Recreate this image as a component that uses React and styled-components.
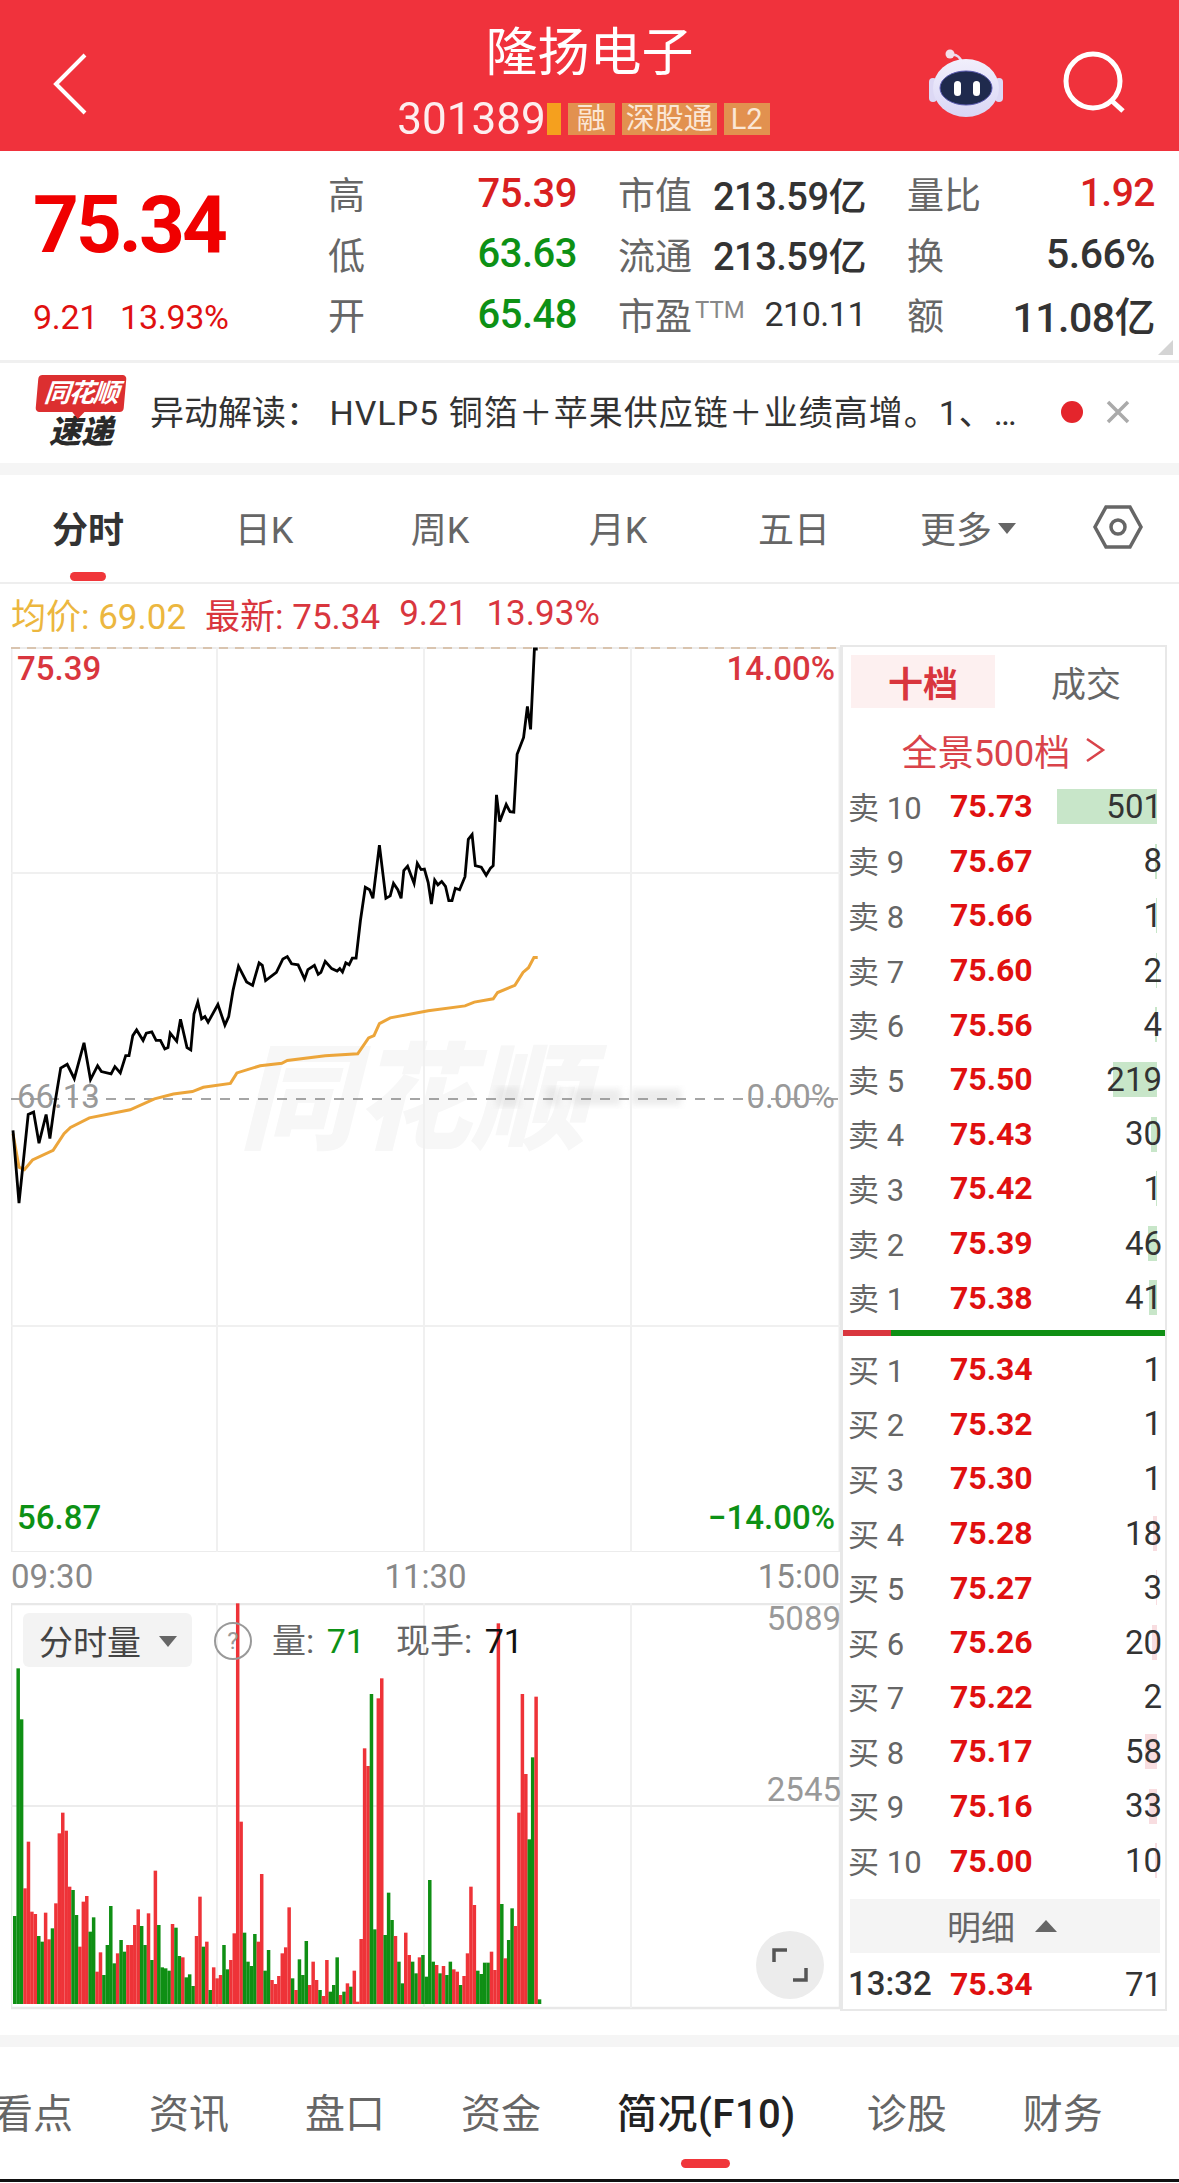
import React from 'react';
import styled, { createGlobalStyle } from 'styled-components';

const GlobalStyle = createGlobalStyle`
  html, body { margin: 0; padding: 0; background: #fff; }
  body { font-family: Roboto, "Noto Sans CJK SC", sans-serif; }
`;

const RED = '#e01010';
const GREEN = '#0d9115';

const sellRows = [
  ['卖', 10, '75.73', 501, 100],
  ['卖', 9, '75.67', 8, 2],
  ['卖', 8, '75.66', 1, 1],
  ['卖', 7, '75.60', 2, 1],
  ['卖', 6, '75.56', 4, 2],
  ['卖', 5, '75.50', 219, 44],
  ['卖', 4, '75.43', 30, 6],
  ['卖', 3, '75.42', 1, 1],
  ['卖', 2, '75.39', 46, 9],
  ['卖', 1, '75.38', 41, 8],
];

const buyRows = [
  ['买', 1, '75.34', 1, 0],
  ['买', 2, '75.32', 1, 0],
  ['买', 3, '75.30', 1, 0],
  ['买', 4, '75.28', 18, 4],
  ['买', 5, '75.27', 3, 1],
  ['买', 6, '75.26', 20, 5],
  ['买', 7, '75.22', 2, 0],
  ['买', 8, '75.17', 58, 12],
  ['买', 9, '75.16', 33, 8],
  ['买', 10, '75.00', 10, 2],
];

// read off the reference crop, in crop units
const pricePts = [
  [24,1378],[35,1530],[52,1345],[62,1340],[72,1405],[85,1345],[92,1395],[100,1330],[112,1248],[124,1240],
  [137,1270],[155,1195],[167,1272],[180,1243],[187,1255],[205,1260],[212,1245],[222,1258],[232,1222],[238,1222],
  [245,1180],[252,1168],[264,1190],[270,1175],[280,1172],[288,1190],[296,1190],[304,1208],[310,1205],[314,1175],
  [326,1192],[333,1146],[345,1205],[352,1210],[358,1135],[365,1110],[372,1145],[378,1140],[384,1152],[402,1115],
  [415,1158],[422,1140],[430,1085],[440,1035],[455,1068],[466,1075],[478,1028],[484,1033],[490,1065],[510,1048],
  [522,1020],[530,1015],[538,1030],[550,1032],[562,1062],[568,1042],[580,1033],[587,1052],[592,1048],[600,1025],
  [612,1040],[622,1045],[627,1040],[632,1047],[638,1028],[644,1032],[650,1018],[657,1018],[665,940],[674,870],
  [682,875],[688,893],[700,782],[712,893],[720,888],[726,862],[734,875],[740,893],[745,835],[752,826],
  [764,862],[770,820],[777,833],[783,832],[790,860],[796,905],[802,855],[808,865],[815,858],[822,868],
  [828,898],[834,898],[840,872],[848,875],[858,848],[864,770],[871,760],[877,825],[888,828],[897,845],
  [905,830],[910,825],[916,677],[922,733],[934,697],[941,712],[948,713],[954,592],[966,557],[973,492],
  [979,540],[986,372],[992,372],
];

const avgPts = [
  [24,1385],[35,1455],[45,1460],[60,1440],[98,1420],[118,1385],[130,1372],[165,1352],[240,1335],[285,1312],
  [320,1302],[355,1297],[375,1288],[425,1280],[437,1258],[480,1243],[520,1238],[530,1232],[600,1222],[660,1218],
  [680,1185],[690,1180],[700,1155],[720,1143],[790,1128],[858,1118],[875,1110],[910,1103],[918,1090],[950,1075],
  [965,1048],[975,1038],[985,1017],[992,1017],
];

const volBars = `g1068 g325 g478 r985 r845 r1055 r1062 g1128 g1145 r1058 r1138 g1105 r1030 r820 r758 r812 r980 g990 g1065 r1160
r1025 r1008 g1115 g1072 r1235 r1177 g1245 g1155 g1038 g1210 r1180 g1140 g1175 r1155 r1155 r1095 r1048 g1098 g1155 r1060
g1200 r932 g1095 g1222 g1225 g1232 r1092 g1103 g1188 r1192 g1252 g1243 g1278 r1128 r1010 g1160 r1145 g1290 r1222 r1255
r1245 g1155 g1228 r1200 r1120 r130 r785 g1118 g1205 g1218 g1122 r1145 r942 g1232 g1170 r1260 r1272 r1248 r1180 r1162
r1042 g1255 r1290 g1198 g1245 g1143 r1275 r1205 r1260 g1290 r1308 r1200 g1295 g1275 g1192 r1305 g1295 r1270 g1280 r1232
r1325 r1137 r565 r618 g402 g1108 r415 r355 g1125 g998 g1080 r1128 g1205 g1270 r1118 r1185 g1205 g1240 r1192 g1185
g1250 g960 g1205 r1215 g1240 r1218 g1245 g1205 r1228 r1235 g1275 r1248 r1180 r980 r1035 g1232 g1242 g1208 g1208 r1175
r1230 r190 g1032 r1195 g1140 g1045 r1098 r758 r402 r642 g838 g592 r410 g1318`.split(/\s+/);

const toLine = (pts) =>
  pts.map(([x, y]) => `${(x / 1.845 - 11).toFixed(1)},${(470 + y / 2.09 - 646).toFixed(1)}`).join(' ');

const Page = styled.div`
  width: 1179px;
  height: 2183px;
  overflow: hidden;
  display: flex;
  flex-direction: column;
  background: #fff;
  color: #333;
`;

const Header = styled.header`
  height: 151px;
  flex: none;
  position: relative;
  background: #f0323c;
  display: flex;
  flex-direction: column;
  align-items: center;
  color: #fff;
`;

const Title = styled.div`
  margin-top: 22px;
  font-size: 52px;
  line-height: 64px;
`;

const CodeRow = styled.div`
  display: flex;
  align-items: center;
  height: 32px;
  margin-top: 17px;
  margin-left: -5px;
`;

const Code = styled.span`
  font-size: 44px;
  color: #fff;
  opacity: 0.92;
  margin-right: 1px;
`;

const Stripe = styled.span`
  width: 14px;
  height: 32px;
  background: #f5a01e;
  margin-right: 7px;
`;

const Tag = styled.span`
  height: 32px;
  padding: 0 ${(p) => p.$pad}px;
  margin-right: 7px;
  background: #e2914f;
  color: #fbe7d6;
  font-size: 29px;
  line-height: 32px;
`;

const BackIcon = styled.svg`
  position: absolute;
  left: 50px;
  top: 50px;
`;

const RobotIcon = styled.svg`
  position: absolute;
  left: 925px;
  top: 46px;
`;

const SearchIcon = styled.svg`
  position: absolute;
  left: 1060px;
  top: 48px;
`;

const Quote = styled.section`
  height: 209px;
  flex: none;
  position: relative;
  display: flex;
`;

const PriceBlock = styled.div`
  width: 328px;
  flex: none;
  box-sizing: border-box;
  padding: 26px 0 0 33px;
`;

const BigPrice = styled.div`
  font-size: 80px;
  line-height: 96px;
  font-weight: 700;
  color: #f00000;
  letter-spacing: -3px;
`;

const PriceChange = styled.div`
  margin-top: 24px;
  display: flex;
  gap: 22px;
  font-size: 34px;
  line-height: 40px;
  color: #e01010;
  letter-spacing: -0.3px;
`;

const StatGrid = styled.div`
  display: grid;
  grid-template-columns: 249px 248px 248px;
  column-gap: 41px;
  grid-auto-rows: 60.5px;
  padding-top: 12px;
`;

const StatCell = styled.div`
  display: flex;
  justify-content: space-between;
  align-items: center;
`;

const StatLabel = styled.span`
  font-size: 37px;
  color: #666;
`;

const StatValue = styled.span`
  font-size: ${(p) => p.$size || 38}px;
  font-weight: ${(p) => p.$weight || 500};
  color: ${(p) => p.$color || '#333'};
  letter-spacing: -0.5px;
`;

const Sup = styled.sup`
  font-size: 24px;
  color: #888;
  margin-left: 3px;
  vertical-align: 12px;
  line-height: 0;
`;

const CornerMark = styled.i`
  position: absolute;
  right: 6px;
  bottom: 5px;
  width: 0;
  height: 0;
  border-left: 15px solid transparent;
  border-bottom: 15px solid #d4d4d4;
`;

const Notice = styled.section`
  height: 100px;
  flex: none;
  border-top: 3px solid #f0f0f0;
  border-bottom: 12px solid #f5f5f5;
  display: flex;
  align-items: center;
  position: relative;
`;

const Logo = styled.div`
  width: 150px;
  flex: none;
  padding-left: 37px;
  box-sizing: border-box;
  margin-top: -2px;
`;

const LogoTop = styled.div`
  width: 88px;
  height: 37px;
  position: relative;
  background: #dc2f30;
  border-radius: 4px;
  transform: skewX(-5deg);
  color: #fff;
  font-size: 26px;
  line-height: 37px;
  font-weight: 700;
  font-style: italic;
  text-align: center;
  letter-spacing: -1.5px;
  white-space: nowrap;

  &::after {
    content: '';
    position: absolute;
    left: 36px;
    bottom: -7px;
    border-left: 7px solid transparent;
    border-right: 7px solid transparent;
    border-top: 8px solid #dc2f30;
  }
`;

const LogoBottom = styled.div`
  margin-top: 2px;
  width: 88px;
  text-align: center;
  color: #2a2a2a;
  font-size: 32px;
  line-height: 36px;
  font-weight: 900;
  font-style: italic;
`;

const NoticeText = styled.div`
  width: 890px;
  flex: none;
  margin-top: -5px;
  font-size: 34px;
  color: #333;
  white-space: nowrap;
  overflow: hidden;
`;

const NoticeBody = styled.span`
  letter-spacing: 1px;
`;

const NoticeDot = styled.i`
  position: absolute;
  left: 1061px;
  top: 38px;
  width: 22px;
  height: 22px;
  border-radius: 50%;
  background: #e4252c;
`;

const CloseIcon = styled.svg`
  position: absolute;
  left: 1104px;
  top: 35px;
`;

const PeriodTabs = styled.nav`
  height: 109px;
  flex: none;
  display: grid;
  grid-template-columns: 176px 176px 176px 180px 172px 176px 123px;
  border-bottom: 2px solid #eee;
  box-sizing: border-box;
`;

const PeriodTab = styled.div`
  position: relative;
  display: flex;
  align-items: center;
  justify-content: center;
  padding-bottom: 3px;
  font-size: 36px;
  font-weight: ${(p) => (p.$active ? 700 : 400)};
  color: ${(p) => (p.$active ? '#333' : '#666')};

  ${(p) =>
    p.$active &&
    `&::after {
      content: '';
      position: absolute;
      left: 70px;
      bottom: 1px;
      width: 36px;
      height: 9px;
      border-radius: 5px;
      background: #f0363a;
    }`}
`;

const Caret = styled.i`
  margin-left: 6px;
  margin-top: 2px;
  border-left: 9px solid transparent;
  border-right: 9px solid transparent;
  border-top: 11px solid #666;
`;

const Legend = styled.div`
  height: 61px;
  flex: none;
  display: flex;
  align-items: center;
  padding: 0 0 2px 11px;
  box-sizing: border-box;
  font-size: 35px;
  gap: 19px;
  color: #d9363e;
`;

const LegendItem = styled.span`
  color: ${(p) => p.$color || 'inherit'};
  white-space: nowrap;
`;

const Workspace = styled.div`
  height: 1366px;
  flex: none;
  display: flex;
  padding-left: 11px;
`;

const LeftColumn = styled.div`
  width: 829px;
  flex: none;
  display: flex;
  flex-direction: column;
`;

const PriceChart = styled.div`
  position: relative;
  margin-top: 2px;
  height: 905px;
  flex: none;
`;

const ChartSvg = styled.svg`
  position: absolute;
  left: 0;
  top: 0;
  display: block;
`;

const Watermark = styled.div`
  position: absolute;
  left: 228px;
  top: 383px;
  font-size: 116px;
  line-height: 140px;
  font-weight: 900;
  font-style: italic;
  color: #f7f7f7;
  white-space: nowrap;
`;

const ChartLabel = styled.span`
  position: absolute;
  ${(p) => (p.$right ? 'right: 5px;' : 'left: 6px;')}
  top: ${(p) => p.$top}px;
  font-size: 33px;
  line-height: 36px;
  font-weight: ${(p) => p.$weight || 400};
  color: ${(p) => p.$color};
`;

const TimeRow = styled.div`
  height: 51px;
  flex: none;
  display: flex;
  justify-content: space-between;
  align-items: center;
  font-size: 33px;
  color: #888;
  padding-bottom: 3px;
  box-sizing: border-box;
`;

const VolumeChart = styled.div`
  position: relative;
  height: 407px;
  flex: none;
`;

const VolumeBadge = styled.div`
  position: absolute;
  left: 12px;
  top: 10px;
  width: 169px;
  height: 54px;
  border-radius: 6px;
  background: #f3f3f3;
  display: flex;
  align-items: center;
  gap: 12px;
  padding-left: 16px;
  box-sizing: border-box;
  font-size: 34px;
  color: #444;
`;

const HelpMark = styled.span`
  position: absolute;
  left: 203px;
  top: 19px;
  width: 34px;
  height: 34px;
  border: 2px solid #999;
  border-radius: 50%;
  text-align: center;
  font-size: 24px;
  line-height: 34px;
  color: #999;
`;

const VolumeInfo = styled.span`
  position: absolute;
  left: ${(p) => p.$left}px;
  top: 17px;
  font-size: 34px;
  line-height: 42px;
  color: #666;
  white-space: nowrap;
`;

const InfoValue = styled.b`
  font-weight: 400;
  margin-left: 4px;
  color: ${(p) => p.$color};
`;

const AxisLabel = styled.span`
  position: absolute;
  right: -1px;
  top: ${(p) => p.$top}px;
  font-size: 33px;
  line-height: 36px;
  color: #999;
`;

const ExpandButton = styled.div`
  position: absolute;
  left: 745px;
  top: 328px;
  width: 68px;
  height: 68px;
  border-radius: 50%;
  background: #ececec;
  display: flex;
  align-items: center;
  justify-content: center;
`;

const Depth = styled.aside`
  width: 327px;
  flex: none;
  box-sizing: border-box;
  border: 2px solid #e8e8e8;
  border-width: 2px 2px 2px 3px;
  height: 1366px;
  display: flex;
  flex-direction: column;
`;

const DepthTabs = styled.div`
  display: grid;
  grid-template-columns: 144px 1fr;
  margin: 8px 0 0 8px;
  height: 53px;
  flex: none;
`;

const DepthTab = styled.div`
  display: flex;
  align-items: center;
  justify-content: center;
  padding-left: ${(p) => (p.$active ? 0 : 12)}px;
  font-size: 35px;
  font-weight: ${(p) => (p.$active ? 700 : 400)};
  color: ${(p) => (p.$active ? '#d9363e' : '#666')};
  background: ${(p) => (p.$active ? '#fdf0f0' : 'transparent')};
`;

const FullDepth = styled.div`
  height: 71px;
  flex: none;
  box-sizing: border-box;
  padding-top: 12px;
  display: flex;
  align-items: center;
  justify-content: center;
  gap: 14px;
  font-size: 36px;
  color: #d9434a;
`;

const DepthRow = styled.div`
  height: 54.6px;
  flex: none;
  position: relative;
  display: grid;
  grid-template-columns: 102px 100px 1fr;
  align-items: center;
  padding: 0 3px 0 5px;
`;

const RowLabel = styled.span`
  font-size: ${(p) => p.$size || 31}px;
  margin-top: -2px;
  color: ${(p) => p.$color || '#666'};
  font-weight: ${(p) => p.$weight || 400};
  white-space: nowrap;
  position: relative;
`;

const RowPrice = styled.span`
  font-size: 32px;
  font-weight: 700;
  color: ${RED};
  position: relative;
`;

const RowQty = styled.span`
  font-size: 33px;
  color: #333;
  text-align: right;
  position: relative;
`;

const QtyBar = styled.i`
  position: absolute;
  right: 8px;
  top: 10px;
  height: 35px;
  background: ${(p) => p.$color};
`;

const RatioBar = styled.div`
  margin: 5px 0 6px;
  height: 6px;
  flex: none;
  display: flex;
`;

const RatioPart = styled.i`
  display: block;
  height: 100%;
  flex: ${(p) => p.$grow};
  background: ${(p) => p.$color};
`;

const DetailBar = styled.div`
  margin: 11px 5px 4px 7px;
  height: 54px;
  flex: none;
  background: #f4f4f4;
  display: flex;
  align-items: center;
  justify-content: center;
  gap: 20px;
  padding-right: 6px;
  font-size: 34px;
  color: #666;
`;

const CaretUp = styled.i`
  border-left: 11px solid transparent;
  border-right: 11px solid transparent;
  border-bottom: 12px solid #666;
`;

const BottomGap = styled.div`
  height: 12px;
  flex: none;
  margin-top: 24px;
  background: #f5f5f5;
`;

const BottomTabs = styled.nav`
  height: 132px;
  flex: none;
  box-sizing: border-box;
  padding-top: 3px;
  display: flex;
  gap: 76px;
  align-items: center;
  margin-left: -7px;
  white-space: nowrap;
`;

const BottomTab = styled.div`
  position: relative;
  font-size: 40px;
  line-height: 50px;
  font-weight: ${(p) => (p.$active ? 500 : 400)};
  color: ${(p) => (p.$active ? '#222' : '#666')};
  letter-spacing: ${(p) => (p.$active ? '0.5px' : '0')};
  margin-right: ${(p) => (p.$active ? -5 : 0)}px;

  ${(p) =>
    p.$active &&
    `&::after {
      content: '';
      position: absolute;
      left: 64px;
      bottom: -28px;
      width: 49px;
      height: 9px;
      border-radius: 5px;
      background: #f0363a;
    }`}
`;

const HomeBar = styled.div`
  height: 3px;
  flex: none;
  background: #111;
`;

function Robot() {
  return (
    <RobotIcon width="82" height="74" viewBox="0 0 82 74">
      <defs>
        <linearGradient id="shell" x1="0" y1="0" x2="0" y2="1">
          <stop offset="0" stopColor="#f1effc" />
          <stop offset="1" stopColor="#d9d6f5" />
        </linearGradient>
      </defs>
      <path d="M38 19 C36 11 31 8 27 9" fill="none" stroke="#ead9ee" strokeWidth="2.5" />
      <circle cx="25" cy="8" r="4.5" fill="#f3dfea" />
      <rect x="4" y="32" width="8" height="24" rx="4" fill="#dcd8f4" />
      <rect x="70" y="32" width="8" height="24" rx="4" fill="#dcd8f4" />
      <ellipse cx="41" cy="42" rx="33" ry="29" fill="url(#shell)" />
      <ellipse cx="41" cy="42" rx="26" ry="17" fill="#1f2a4d" stroke="#5b5bb0" strokeWidth="1" />
      <rect x="29" y="35" width="7" height="15" rx="3.5" fill="#fff" />
      <rect x="48" y="35" width="7" height="15" rx="3.5" fill="#fff" />
    </RobotIcon>
  );
}

function StatRow({ label, value, color, size, weight, sup }) {
  return (
    <StatCell>
      <StatLabel>
        {label}
        {sup && <Sup>{sup}</Sup>}
      </StatLabel>
      <StatValue $color={color} $size={size} $weight={weight}>
        {value}
      </StatValue>
    </StatCell>
  );
}

function PriceLines() {
  const gridX = [206, 413, 620];
  return (
    <ChartSvg width="829" height="905" viewBox="0 0 829 905">
      <filter id="smudge">
        <feGaussianBlur stdDeviation="3" />
      </filter>
      <g filter="url(#smudge)" fill="#d6d6d6" opacity="0.45">
        <rect x="485" y="440" width="24" height="20" />
        <rect x="535" y="440" width="14" height="18" />
        <rect x="560" y="442" width="50" height="16" />
        <rect x="620" y="442" width="50" height="16" />
      </g>
      <rect x="0.5" y="1" width="828" height="904" fill="none" stroke="#ececec" strokeWidth="2" />
      {gridX.map((x) => (
        <line key={x} x1={x} x2={x} y1="0" y2="905" stroke="#f0f0f0" strokeWidth="2" />
      ))}
      <line x1="0" x2="829" y1="226" y2="226" stroke="#f0f0f0" strokeWidth="2" />
      <line x1="0" x2="829" y1="679" y2="679" stroke="#f0f0f0" strokeWidth="2" />
      <line x1="0" x2="829" y1="1" y2="1" stroke="#d2b79a" strokeWidth="1.5" strokeDasharray="9 7" />
      <line x1="0" x2="829" y1="452" y2="452" stroke="#888" strokeWidth="1.5" strokeDasharray="10 9" />
      <polyline points={toLine(avgPts)} fill="none" stroke="#eca53a" strokeWidth="3" />
      <polyline points={toLine(pricePts)} fill="none" stroke="#000" strokeWidth="2.8" />
    </ChartSvg>
  );
}

function VolumeBars() {
  const top = (y) => 1560 + y / 3 - 1603;
  return (
    <ChartSvg width="829" height="407" viewBox="0 0 829 407">
      <rect x="0" y="1" width="829" height="404" fill="none" stroke="#e8e8e8" strokeWidth="2.5" />
      {[206, 413, 620].map((x) => (
        <line key={x} x1={x} x2={x} y1="0" y2="405" stroke="#f0f0f0" strokeWidth="2" />
      ))}
      <line x1="0" x2="829" y1="203" y2="203" stroke="#ececec" strokeWidth="2" />
      {volBars.map((b, i) => {
        const y = top(Number(b.slice(1)));
        return (
          <rect
            key={i}
            x={2 + i * 3.43}
            y={y}
            width="3.5"
            height={401 - y}
            fill={b[0] === 'r' ? '#ee3338' : '#0f8f14'}
          />
        );
      })}
    </ChartSvg>
  );
}

function BookRow({ row, barColor }) {
  const [side, level, price, qty, bar] = row;
  return (
    <DepthRow>
      {bar > 0 && <QtyBar $color={barColor} style={{ width: bar }} />}
      <RowLabel>
        {side} {level}
      </RowLabel>
      <RowPrice>{price}</RowPrice>
      <RowQty>{qty}</RowQty>
    </DepthRow>
  );
}

export default function App() {
  return (
    <Page>
      <GlobalStyle />
      <Header>
        <BackIcon width="40" height="68" viewBox="0 0 40 68">
          <path d="M35 5 L6 34 L35 63" fill="none" stroke="#fff" strokeWidth="4" />
        </BackIcon>
        <Title>隆扬电子</Title>
        <CodeRow>
          <Code>301389</Code>
          <Stripe />
          <Tag $pad={9}>融</Tag>
          <Tag $pad={4}>深股通</Tag>
          <Tag $pad={7}>L2</Tag>
        </CodeRow>
        <Robot />
        <SearchIcon width="70" height="70" viewBox="0 0 70 70">
          <circle cx="33" cy="33" r="27" fill="none" stroke="#fff" strokeWidth="5" />
          <path d="M52 53 L63 63" fill="none" stroke="#fff" strokeWidth="5" />
        </SearchIcon>
      </Header>

      <Quote>
        <PriceBlock>
          <BigPrice>75.34</BigPrice>
          <PriceChange>
            <span>9.21</span>
            <span>13.93%</span>
          </PriceChange>
        </PriceBlock>
        <StatGrid>
          <StatRow label="高" value="75.39" color="#d9201f" size={40} />
          <StatRow label="市值" value="213.59亿" />
          <StatRow label="量比" value="1.92" color="#d9201f" size={39} />
          <StatRow label="低" value="63.63" color={GREEN} size={40} />
          <StatRow label="流通" value="213.59亿" />
          <StatRow label="换" value="5.66%" size={41} />
          <StatRow label="开" value="65.48" color={GREEN} size={40} />
          <StatRow label="市盈" sup="TTM" value="210.11" size={34} weight={400} />
          <StatRow label="额" value="11.08亿" size={41} />
        </StatGrid>
        <CornerMark />
      </Quote>

      <Notice>
        <Logo>
          <LogoTop>同花顺</LogoTop>
          <LogoBottom>速递</LogoBottom>
        </Logo>
        <NoticeText>
          异动解读：<NoticeBody> HVLP5 铜箔＋苹果供应链＋业绩高增。1、…</NoticeBody>
        </NoticeText>
        <NoticeDot />
        <CloseIcon width="28" height="28" viewBox="0 0 28 28">
          <path d="M4 4 L24 24 M24 4 L4 24" stroke="#aaa" strokeWidth="3.5" fill="none" />
        </CloseIcon>
      </Notice>

      <PeriodTabs>
        <PeriodTab $active>分时</PeriodTab>
        <PeriodTab>日K</PeriodTab>
        <PeriodTab>周K</PeriodTab>
        <PeriodTab>月K</PeriodTab>
        <PeriodTab>五日</PeriodTab>
        <PeriodTab>
          更多
          <Caret />
        </PeriodTab>
        <PeriodTab>
          <svg width="52" height="46" viewBox="0 0 52 46">
            <path d="M14 3 H38 L49 23 L38 43 H14 L3 23 Z" fill="none" stroke="#666" strokeWidth="3.5" />
            <circle cx="26" cy="23" r="7" fill="none" stroke="#666" strokeWidth="3.5" />
          </svg>
        </PeriodTab>
      </PeriodTabs>

      <Legend>
        <LegendItem $color="#ecb73f">均价: 69.02</LegendItem>
        <LegendItem>最新: 75.34</LegendItem>
        <LegendItem>9.21</LegendItem>
        <LegendItem>13.93%</LegendItem>
      </Legend>

      <Workspace>
        <LeftColumn>
          <PriceChart>
            <Watermark>同花顺</Watermark>
            <PriceLines />
            <ChartLabel $top={4} $color="#d9363e" $weight={500}>75.39</ChartLabel>
            <ChartLabel $top={4} $right $color="#d9363e" $weight={500}>14.00%</ChartLabel>
            <ChartLabel $top={432} $color="#999">66.13</ChartLabel>
            <ChartLabel $top={432} $right $color="#999">0.00%</ChartLabel>
            <ChartLabel $top={853} $color={GREEN} $weight={500}>56.87</ChartLabel>
            <ChartLabel $top={853} $right $color={GREEN} $weight={500}>−14.00%</ChartLabel>
          </PriceChart>
          <TimeRow>
            <span>09:30</span>
            <span>11:30</span>
            <span>15:00</span>
          </TimeRow>
          <VolumeChart>
            <VolumeBars />
            <VolumeBadge>
              分时量
              <Caret />
            </VolumeBadge>
            <HelpMark>?</HelpMark>
            <VolumeInfo $left={261}>
              量:<InfoValue $color={GREEN}>&nbsp;71</InfoValue>
            </VolumeInfo>
            <VolumeInfo $left={385}>
              现手:<InfoValue $color="#111">&nbsp;71</InfoValue>
            </VolumeInfo>
            <AxisLabel $top={-2}>5089</AxisLabel>
            <AxisLabel $top={169}>2545</AxisLabel>
            <ExpandButton>
              <svg width="36" height="36" viewBox="0 0 36 36">
                <path d="M2 15 V3 H15 M34 21 V33 H21" fill="none" stroke="#555" strokeWidth="3.5" />
              </svg>
            </ExpandButton>
          </VolumeChart>
        </LeftColumn>

        <Depth>
          <DepthTabs>
            <DepthTab $active>十档</DepthTab>
            <DepthTab>成交</DepthTab>
          </DepthTabs>
          <FullDepth>
            全景500档
            <svg width="22" height="28" viewBox="0 0 22 28">
              <path d="M3 3 L19 14 L3 25" fill="none" stroke="#d9434a" strokeWidth="2.5" />
            </svg>
          </FullDepth>
          {sellRows.map((r) => (
            <BookRow key={r[1]} row={r} barColor="#c8e6c9" />
          ))}
          <RatioBar>
            <RatioPart $grow={49} $color="#d9363e" />
            <RatioPart $grow={278} $color="#0f8f14" />
          </RatioBar>
          {buyRows.map((r) => (
            <BookRow key={r[1]} row={r} barColor="#f8dde0" />
          ))}
          <DetailBar>
            明细
            <CaretUp />
          </DetailBar>
          <DepthRow>
            <RowLabel $color="#333" $weight={500} $size={33}>13:32</RowLabel>
            <RowPrice>75.34</RowPrice>
            <RowQty>71</RowQty>
          </DepthRow>
        </Depth>
      </Workspace>

      <BottomGap />
      <BottomTabs>
        <BottomTab>看点</BottomTab>
        <BottomTab>资讯</BottomTab>
        <BottomTab>盘口</BottomTab>
        <BottomTab>资金</BottomTab>
        <BottomTab $active>简况(F10)</BottomTab>
        <BottomTab>诊股</BottomTab>
        <BottomTab>财务</BottomTab>
      </BottomTabs>
      <HomeBar />
    </Page>
  );
}
